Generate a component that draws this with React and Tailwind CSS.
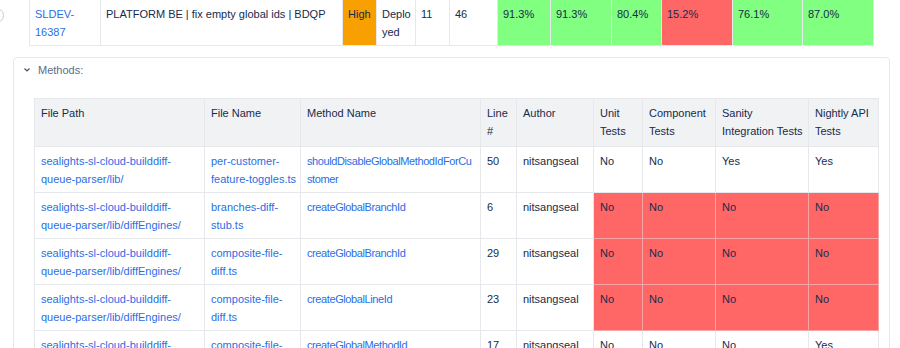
import React from 'react';

const topRow = [
  { w: 71, text: 'SLDEV-16387', link: true },
  { w: 242, text: 'PLATFORM BE | fix empty global ids | BDQP' },
  { w: 34, text: 'High', bg: 'bg-[#f8a000]' },
  { w: 39, text: 'Deployed', breakAll: true },
  { w: 34, text: '11' },
  { w: 48, text: '46' },
  { w: 53, text: '91.3%', bg: 'bg-[#80ff80]' },
  { w: 61, text: '91.3%', bg: 'bg-[#80ff80]' },
  { w: 50, text: '80.4%', bg: 'bg-[#80ff80]' },
  { w: 71, text: '15.2%', bg: 'bg-[#ff6666]' },
  { w: 70, text: '76.1%', bg: 'bg-[#80ff80]' },
  { w: 71, text: '87.0%', bg: 'bg-[#80ff80]' },
];

const columns = [
  { w: 170, label: 'File Path' },
  { w: 96, label: 'File Name' },
  { w: 180, label: 'Method Name' },
  { w: 36, label: 'Line #' },
  { w: 77, label: 'Author' },
  { w: 49, label: 'Unit Tests' },
  { w: 73, label: 'Component Tests' },
  { w: 93, label: 'Sanity Integration Tests' },
  { w: 70, label: 'Nightly API Tests' },
];

const methods = [
  {
    path: 'sealights-sl-cloud-builddiff-queue-parser/lib/',
    file: 'per-customer-feature-toggles.ts',
    method: 'shouldDisableGlobalMethodIdForCustomer',
    line: 50,
    author: 'nitsangseal',
    tests: ['No', 'No', 'Yes', 'Yes'],
    red: false,
  },
  {
    path: 'sealights-sl-cloud-builddiff-queue-parser/lib/diffEngines/',
    file: 'branches-diff-stub.ts',
    method: 'createGlobalBranchId',
    line: 6,
    author: 'nitsangseal',
    tests: ['No', 'No', 'No', 'No'],
    red: true,
  },
  {
    path: 'sealights-sl-cloud-builddiff-queue-parser/lib/diffEngines/',
    file: 'composite-file-diff.ts',
    method: 'createGlobalBranchId',
    line: 29,
    author: 'nitsangseal',
    tests: ['No', 'No', 'No', 'No'],
    red: true,
  },
  {
    path: 'sealights-sl-cloud-builddiff-queue-parser/lib/diffEngines/',
    file: 'composite-file-diff.ts',
    method: 'createGlobalLineId',
    line: 23,
    author: 'nitsangseal',
    tests: ['No', 'No', 'No', 'No'],
    red: true,
  },
  {
    path: 'sealights-sl-cloud-builddiff-queue-parser/lib/diffEngines/',
    file: 'composite-file-diff.ts',
    method: 'createGlobalMethodId',
    line: 17,
    author: 'nitsangseal',
    tests: ['No', 'No', 'No', 'Yes'],
    red: false,
  },
];

const cell = 'border border-[#e6e8ec] pl-[6px] pr-[4px] pt-[5px] pb-[4px] align-top';

export default function App() {
  return (
    <div className="relative bg-white text-[11px] leading-[18px] text-[#172b4d] font-['Liberation_Sans',Arial,sans-serif] overflow-hidden h-[348px]">
      {/* edge of a control cut off on the left */}
      <div className="absolute left-[-11px] top-[8px] w-[15px] h-[15px] rounded-full border border-[#c9ccd2]" />

      <table className="ml-[29px] mt-[-1px] table-fixed border-collapse w-[844px]">
        <colgroup>
          {topRow.map((c, i) => (
            <col key={i} style={{ width: c.w }} />
          ))}
        </colgroup>
        <tbody>
          <tr>
            {topRow.map((c, i) => (
              <td
                key={i}
                className={`border border-[#e6e8ec] pl-[5px] pr-[1px] pt-[5px] pb-[4px] align-top ${c.bg || ''} ${c.breakAll ? 'break-all' : ''} ${c.link ? 'text-[#2b6de5]' : ''}`}
              >
                {c.text}
              </td>
            ))}
          </tr>
        </tbody>
      </table>

      <div className="ml-[13px] mt-[11px] w-[877px] border border-[#e6e8ec] rounded-[4px] pb-6">
        <div className="flex items-center pl-[10px] pt-[3px] h-[21px] text-[#5e6c84]">
          <svg width="6" height="4" viewBox="0 0 6 4" className="mr-[8px]">
            <polyline points="0.5,0.5 3,3 5.5,0.5" fill="none" stroke="#42526e" strokeWidth="1.2" />
          </svg>
          <span>Methods:</span>
        </div>

        <table className="ml-[20px] mt-[19px] table-fixed border-collapse w-[844px]">
          <colgroup>
            {columns.map((c, i) => (
              <col key={i} style={{ width: c.w }} />
            ))}
          </colgroup>
          <thead>
            <tr className="bg-[#f1f2f4]">
              {columns.map((c, i) => (
                <th key={i} className={`${cell} pb-[6px] font-normal text-left h-[48px]`}>
                  {c.label}
                </th>
              ))}
            </tr>
          </thead>
          <tbody>
            {methods.map((m, i) => (
              <tr key={i} className="h-[46px]">
                <td className={`${cell} text-[#2b6de5]`}>{m.path}</td>
                <td className={`${cell} text-[#2b6de5]`}>{m.file}</td>
                <td className={`${cell} pr-0 text-[#2b6de5] break-all tracking-[-0.4px]`}>{m.method}</td>
                <td className={cell}>{m.line}</td>
                <td className={cell}>{m.author}</td>
                {m.tests.map((t, j) => (
                  <td
                    key={j}
                    className={`${cell} ${m.red ? 'bg-[#ff6666] border-[#f3a5a5]' : ''}`}
                  >
                    {t}
                  </td>
                ))}
              </tr>
            ))}
          </tbody>
        </table>
      </div>
    </div>
  );
}
